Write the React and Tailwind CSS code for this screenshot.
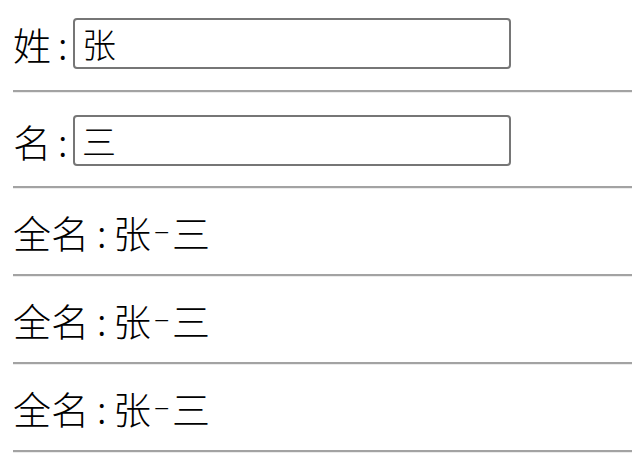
import { useState } from "react";

const font = { fontFamily: '"Noto Sans CJK SC", "Noto Sans", sans-serif' };

function Divider() {
  return <div className="h-[3px] border-t-2 border-b border-t-[#a3a3a3] border-b-[#ececec]" />;
}

function Field({ label, value, onChange, pad }) {
  return (
    <div className={`flex items-center ${pad}`}>
      <span className="text-[38px] font-light leading-none">{label}</span>
      <span className="w-[22px] pl-[7px] text-[38px] font-light leading-none">:</span>
      <input
        value={value}
        onChange={(e) => onChange(e.target.value)}
        className="w-[438px] h-[51px] border-2 border-[#767676] rounded-[4px] px-[7px] text-[34px] font-light outline-none"
        style={font}
      />
    </div>
  );
}

export default function App() {
  const [xing, setXing] = useState("张");
  const [ming, setMing] = useState("三");

  return (
    <div className="pl-[13px] bg-white text-black min-h-screen" style={font}>
      <Field label="姓" value={xing} onChange={setXing} pad="pt-[18px] pb-[21px]" />
      <Divider />
      <Field label="名" value={ming} onChange={setMing} pad="pt-[22px] pb-[20px]" />
      <Divider />
      {[0, 1, 2].map((i) => (
        <div key={i}>
          <div className="flex items-center h-[85px] text-[38px] font-light leading-none">
            <span>全名</span>
            <span className="w-[24px] pl-[8px]">:</span>
            <span>{xing}</span>
            <span className="w-[21px] text-center font-thin scale-x-[1.4] -translate-y-[5px]">-</span>
            <span>{ming}</span>
          </div>
          <Divider />
        </div>
      ))}
    </div>
  );
}
